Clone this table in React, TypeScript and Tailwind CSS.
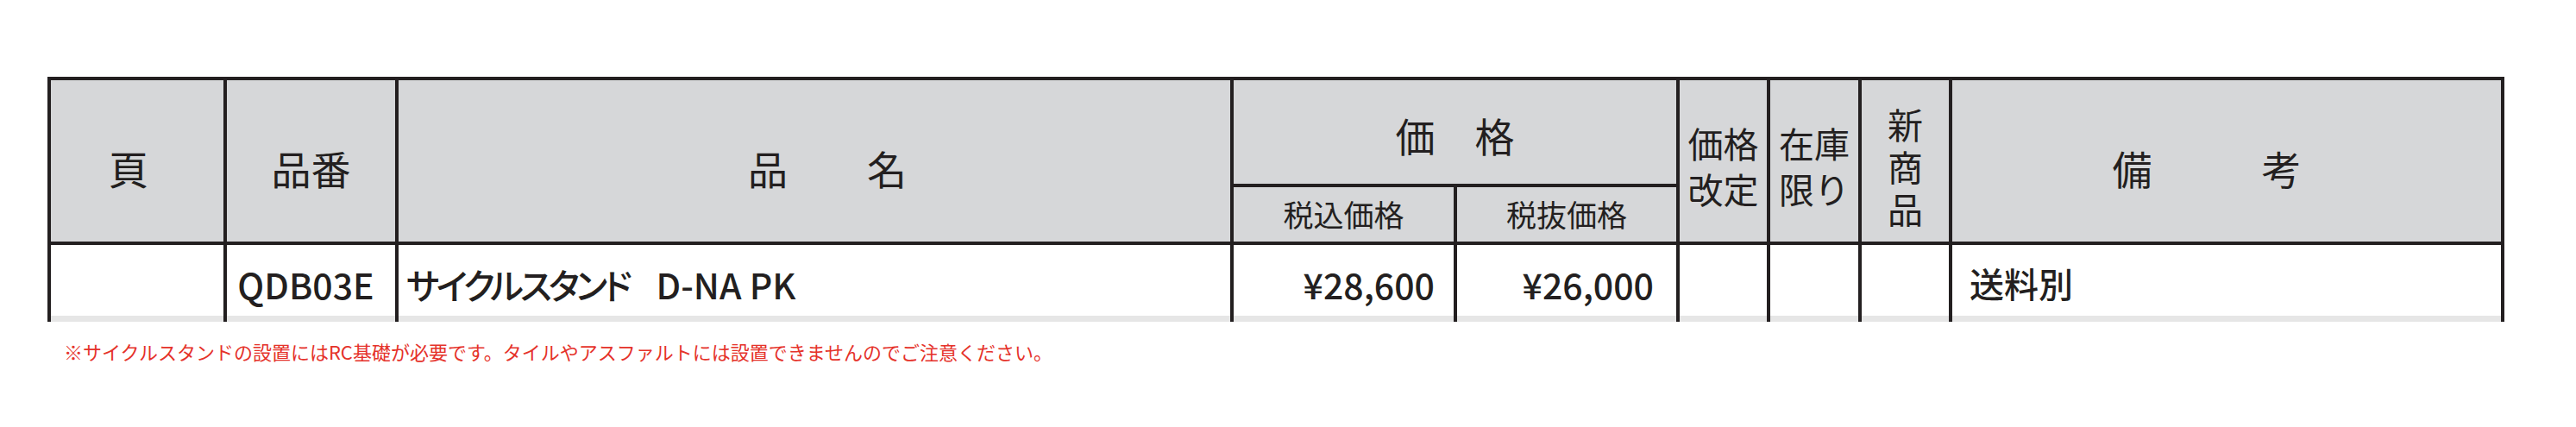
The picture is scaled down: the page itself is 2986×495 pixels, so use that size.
import React from "react";

const font = "font-['Noto_Sans_CJK_JP','Noto_Sans_CJK_SC',sans-serif]";

export default function App() {
  const head = "bg-[#d6d7d9] flex items-center justify-center text-[#231f20]";
  const data = "bg-white flex flex-col";
  const band = "h-[7px] bg-[#e6e6e6]";
  return (
    <div className={`min-h-[495px] w-[2986px] bg-white ${font} text-[#231f20]`}>
      <div className="pt-[89px] pl-[55px]">
        <div className="w-[2848px] bg-[#231f20] pt-[4px] px-[4px]">
          <div className="grid grid-cols-[200px_195px_964px_255px_254px_101px_102px_101px_636px] grid-rows-[120px_63px_89px] gap-[4px]">
            {/* header row */}
            <div className={`${head} col-start-1 row-start-1 row-span-2 text-[46px] leading-none pt-[15px] pr-[20px]`}>頁</div>
            <div className={`${head} col-start-2 row-start-1 row-span-2 text-[46px] leading-none pt-[15px]`}>品番</div>
            <div className={`${head} col-start-3 row-start-1 row-span-2 text-[46px] leading-none pt-[15px] pl-[30px]`}>品　　名</div>
            <div className={`${head} col-start-4 col-span-2 row-start-1 text-[46px] leading-none pt-[6px]`}>価　格</div>
            <div className={`${head} col-start-4 row-start-2 text-[35px] leading-none pb-[3px]`}>税込価格</div>
            <div className={`${head} col-start-5 row-start-2 text-[35px] leading-none pb-[3px]`}>税抜価格</div>
            <div className={`${head} col-start-6 row-start-1 row-span-2 text-[41px] leading-[53px] pt-[10px]`}>
              <div className="flex flex-col items-center">
                <span>価格</span>
                <span>改定</span>
              </div>
            </div>
            <div className={`${head} col-start-7 row-start-1 row-span-2 text-[41px] leading-[53px] pt-[10px]`}>
              <div className="flex flex-col items-center">
                <span>在庫</span>
                <span>限り</span>
              </div>
            </div>
            <div className={`${head} col-start-8 row-start-1 row-span-2 text-[41px] leading-[49px] pt-[12px]`}>
              <div className="flex flex-col items-center">
                <span>新</span>
                <span>商</span>
                <span>品</span>
              </div>
            </div>
            <div className={`${head} col-start-9 row-start-1 row-span-2 text-[46px] leading-none pt-[15px] pr-[46px] gap-[127px]`}>
              <span>備</span>
              <span>考</span>
            </div>

            {/* data row */}
            <div className={`${data} col-start-1 row-start-3`}>
              <div className="h-[82px]" />
              <div className={band} />
            </div>
            <div className={`${data} col-start-2 row-start-3`}>
              <div className="h-[82px] flex items-center justify-center pt-[8px] pr-[12px] text-[41px] leading-none font-medium">QDB03E</div>
              <div className={band} />
            </div>
            <div className={`${data} col-start-3 row-start-3`}>
              <div className="h-[82px] flex items-center pt-[8px] pl-[9px] text-[41px] leading-none whitespace-nowrap font-medium">
                <span className="[font-feature-settings:'palt'] tracking-[-4px]">サイクルスタンド</span>
                <span className="ml-[32px]">D-NA PK</span>
              </div>
              <div className={band} />
            </div>
            <div className={`${data} col-start-4 row-start-3`}>
              <div className="h-[82px] flex items-center justify-end pt-[8px] pr-[22px] text-[41px] leading-none font-medium">¥28,600</div>
              <div className={band} />
            </div>
            <div className={`${data} col-start-5 row-start-3`}>
              <div className="h-[82px] flex items-center justify-end pt-[8px] pr-[26px] text-[41px] leading-none font-medium">¥26,000</div>
              <div className={band} />
            </div>
            <div className={`${data} col-start-6 row-start-3`}>
              <div className="h-[82px]" />
              <div className={band} />
            </div>
            <div className={`${data} col-start-7 row-start-3`}>
              <div className="h-[82px]" />
              <div className={band} />
            </div>
            <div className={`${data} col-start-8 row-start-3`}>
              <div className="h-[82px]" />
              <div className={band} />
            </div>
            <div className={`${data} col-start-9 row-start-3`}>
              <div className="h-[82px] flex items-center pt-[6px] pl-[20px] text-[40px] leading-none font-medium">送料別</div>
              <div className={band} />
            </div>
          </div>
        </div>
        <p className="mt-[23px] pl-[19px] text-[22px] leading-none text-[#e5322a] whitespace-nowrap">
          ※サイクルスタンドの設置にはRC基礎が必要です。タイルやアスファルトには設置できませんのでご注意ください。
        </p>
      </div>
    </div>
  );
}
